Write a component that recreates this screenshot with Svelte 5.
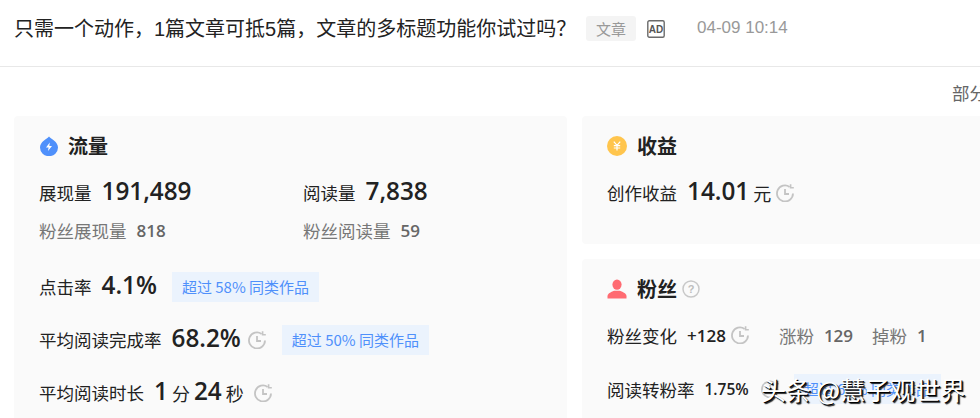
<script lang="ts">
	const blue = [
		{ label: '超过 58% 同类作品' },
		{ label: '超过 50% 同类作品' }
	];
</script>

{#snippet clock()}
	<svg class="clock" viewBox="0 0 18 18" width="18" height="18" fill="none" stroke="#c4c4c4" stroke-width="1.8">
		<path d="M17 9.6A8 8 0 1 1 13.6 2.9" />
		<path d="M14.6 0.2 14.6 3.8 17.8 3.8" stroke-width="1.6" />
		<path d="M9 5V10H13" />
	</svg>
{/snippet}

<div class="page">
	<header class="head">
		<span class="title">只需一个动作，1篇文章可抵5篇，文章的多标题功能你试过吗？</span>
		<span class="tag">文章</span>
		<svg class="ad" viewBox="0 0 18 18" width="18" height="18">
			<rect x="0.8" y="0.8" width="16.4" height="16.4" rx="1.5" fill="none" stroke="#6b6b6b" stroke-width="1.4" />
			<text x="9" y="12.6" text-anchor="middle" font-size="10" font-weight="700" fill="#555" font-family="Liberation Sans, sans-serif">AD</text>
		</svg>
		<span class="date">04-09 10:14</span>
	</header>

	<div class="note">部分数据</div>

	<div class="cards">
		<section class="card left">
			<h3>
				<svg viewBox="0 0 18 20" width="18" height="20">
					<path d="M9 0.5C11 2.8 18 5.8 18 11.5A9 8.7 0 0 1 0 11.5C0 5.8 7 2.8 9 0.5Z" fill="#4f90fb" />
					<path d="M9.8 6.4 6 11.4H8.6L8 15 12 10H9.3Z" fill="#fff" />
				</svg>
				流量
			</h3>
			<div class="two big-row">
				<div class="stat"><span class="lab">展现量</span><b class="num">191,489</b></div>
				<div class="stat"><span class="lab">阅读量</span><b class="num">7,838</b></div>
			</div>
			<div class="two sub-row">
				<div class="sub"><span>粉丝展现量</span><b>818</b></div>
				<div class="sub"><span>粉丝阅读量</span><b>59</b></div>
			</div>
			<div class="stat line first">
				<span class="lab">点击率</span><b class="num">4.1%</b>
				<span class="beat">{blue[0].label}</span>
			</div>
			<div class="stat line second">
				<span class="lab">平均阅读完成率</span><b class="num">68.2%</b>
				{@render clock()}
				<span class="beat">{blue[1].label}</span>
			</div>
			<div class="stat line third">
				<span class="lab">平均阅读时长</span><b class="num">1</b><span class="unit">分</span><b class="num tight">24</b><span class="unit">秒</span>
				{@render clock()}
			</div>
		</section>

		<div class="col">
			<section class="card earn">
				<h3>
					<svg viewBox="0 0 20 20" width="20" height="20">
						<circle cx="10" cy="10" r="10" fill="#ffc54d" />
						<path d="M6.8 5.6 10 9.4 13.2 5.6M10 9.4V14.6M6.8 9.6H13.2M6.8 12H13.2" fill="none" stroke="#fff" stroke-width="1.2" />
					</svg>
					收益
				</h3>
				<div class="stat earn-row">
					<span class="lab">创作收益</span><b class="num">14.01</b><span class="unit">元</span>
					{@render clock()}
				</div>
			</section>

			<section class="card fans">
				<h3>
					<svg viewBox="0 0 20 20" width="20" height="20">
						<ellipse cx="10" cy="5.6" rx="4.6" ry="5.2" fill="#ff6b72" />
						<path d="M0.5 19.5V17.2C0.5 14.2 5 12.6 7.4 11.8H12.6C15 12.6 19.5 14.2 19.5 17.2V19.5Z" fill="#ff6b72" />
					</svg>
					粉丝
					<svg class="help" viewBox="0 0 18 18" width="18" height="18">
						<circle cx="9" cy="9" r="8" fill="none" stroke="#c8c8c8" stroke-width="1.5" />
						<text x="9" y="13" text-anchor="middle" font-size="11" fill="#bdbdbd" font-family="Liberation Sans, sans-serif">?</text>
					</svg>
				</h3>
				<div class="fan-row change">
					<span class="lab">粉丝变化</span><b class="small-num">+128</b>
					{@render clock()}
					<span class="sub up"><span>涨粉</span><b>129</b></span>
					<span class="sub down"><span>掉粉</span><b>1</b></span>
				</div>
				<div class="fan-row rate">
					<span class="lab">阅读转粉率</span><b class="small-num">1.75%</b>
					{@render clock()}
					<span class="beat">超过 62% 同类作品</span>
				</div>
			</section>
		</div>
	</div>

	<div class="mark">头条 @慧子观世界</div>
</div>

<style>
	:global(body) {
		margin: 0;
		background: #fff;
	}

	.page {
		position: relative;
		width: 980px;
		height: 418px;
		overflow: hidden;
		font-family: 'Noto Sans CJK SC', 'Noto Sans', sans-serif;
		color: #222;
	}

	.head {
		display: flex;
		align-items: center;
		height: 66px;
		padding: 0 0 0 14px;
		box-sizing: content-box;
		border-bottom: 1px solid #e8e8e8;
		white-space: nowrap;
	}

	.title {
		flex: none;
		width: 572px;
		height: 46px;
		margin-bottom: 9px;
		font-size: 20px;
		line-height: 46px;
		color: #222;
		font-family: 'Liberation Sans', 'Noto Sans CJK SC', sans-serif;
	}

	.tag {
		flex: none;
		width: 50px;
		height: 25px;
		line-height: 25px;
		margin-bottom: 9px;
		text-align: center;
		font-size: 15px;
		color: #999;
		background: #f4f4f4;
		border-radius: 3px;
	}

	.ad {
		flex: none;
		margin: 0 0 9px 11px;
	}

	.date {
		margin: 0 0 11px 32px;
		font-size: 17px;
		font-family: 'Liberation Sans', sans-serif;
		color: #999;
	}

	.note {
		height: 49px;
		line-height: 52px;
		padding-left: 952px;
		font-size: 17.5px;
		color: #666;
		white-space: nowrap;
	}

	.cards {
		display: grid;
		grid-template-columns: 553px 420px;
		gap: 15px;
		padding-left: 14px;
	}

	.col {
		display: flex;
		flex-direction: column;
		gap: 15px;
	}

	.card {
		background: #fafafa;
		border-radius: 4px;
		padding: 15px 25px 0;
		box-sizing: border-box;
	}

	.left {
		height: 320px;
	}

	.earn {
		height: 128px;
	}

	.fans {
		height: 180px;
	}

	h3 {
		display: flex;
		align-items: center;
		gap: 10px;
		margin: 0;
		height: 29px;
		font-size: 20px;
		font-weight: 700;
		color: #222;
	}

	.left h3 svg {
		margin-left: 1px;
	}

	.help {
		margin-left: -5px;
	}

	.two {
		display: grid;
		grid-template-columns: 264px 1fr;
	}

	.big-row {
		margin-top: 17px;
	}

	.stat {
		display: flex;
		align-items: center;
		height: 31px;
		white-space: nowrap;
	}

	.earn-row {
		margin-top: 17px;
	}

	.lab {
		font-size: 17.5px;
		color: #222;
	}

	.num {
		margin: -4px 0 0 10px;
		font-family: 'Open Sans', Roboto, sans-serif;
		font-size: 24.3px;
		font-weight: 600;
		color: #222;
	}

	.tight {
		margin-left: 4px;
	}

	.unit {
		margin-left: 4px;
		font-size: 18px;
		color: #222;
	}

	.sub {
		display: inline-flex;
		align-items: center;
		gap: 10px;
		font-size: 17.5px;
		color: #777;
	}

	.sub b {
		font-family: 'Open Sans', Roboto, sans-serif;
		font-size: 17px;
		font-weight: 600;
		color: #666;
	}

	.sub-row {
		margin-top: 8px;
		height: 28px;
		align-items: center;
	}

	.clock {
		flex: none;
		margin-left: 6px;
	}

	.beat {
		padding: 0 10px;
		height: 30px;
		line-height: 30px;
		font-size: 15px;
		color: #4f90fb;
		background: #ebf3fd;
		white-space: nowrap;
	}

	.first {
		margin-top: 27px;
	}

	.first .beat {
		margin-left: 15px;
	}

	.second {
		margin-top: 22px;
	}

	.second .clock {
		margin-left: 7px;
	}

	.second .beat {
		margin-left: 16px;
	}

	.third {
		margin-top: 22px;
	}

	.third .clock {
		margin-left: 10px;
	}

	.earn .clock {
		margin-left: 5px;
	}

	.fan-row {
		display: flex;
		align-items: center;
		height: 30px;
		white-space: nowrap;
	}

	.change {
		margin-top: 17px;
	}

	.change .clock {
		margin-left: 5px;
	}

	.small-num {
		margin-left: 10px;
		font-family: 'Open Sans', Roboto, sans-serif;
		font-size: 17px;
		font-weight: 600;
		color: #222;
	}

	.up {
		margin-left: 30px;
	}

	.down {
		margin-left: 19px;
	}

	.rate {
		margin-top: 24px;
	}

	.rate .small-num {
		font-size: 15.5px;
	}

	.rate .clock {
		margin-left: 12px;
	}

	.rate .beat {
		margin-left: 15px;
	}

	.mark {
		position: absolute;
		left: 761px;
		top: 371px;
		font-size: 25px;
		line-height: 36px;
		color: #fff;
		white-space: nowrap;
		font-family: 'Noto Sans CJK SC', sans-serif;
		text-shadow: 1px 1px 0 #000, 2px 2px 1px #222;
	}
</style>
